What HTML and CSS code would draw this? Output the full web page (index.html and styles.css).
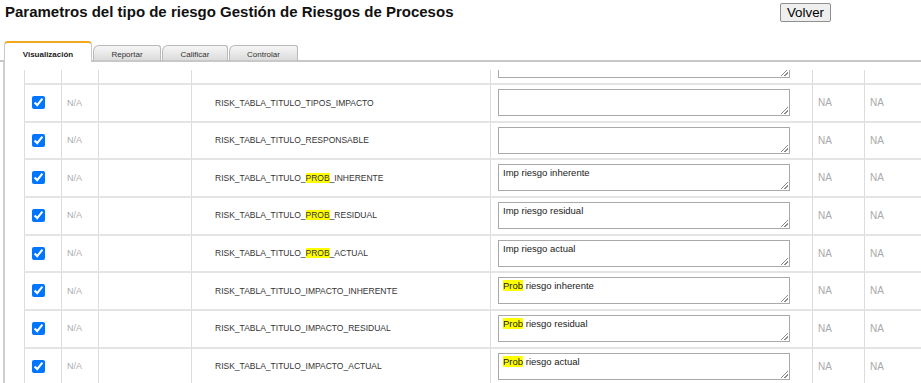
FILE: index.html
```html
<!DOCTYPE html>
<html lang="es">
<head>
    <meta charset="UTF-8">
    <meta name="viewport" content="width=device-width, initial-scale=1.0">
    <title>Parametros del tipo de riesgo</title>
    <link rel="stylesheet" href="styles.css">
</head>
<body>
    <header class="page-head">
        <h1 class="heading">Parametros del tipo de riesgo Gestión de Riesgos de Procesos</h1>
        <button class="btn-back">Volver</button>
    </header>

    <ul class="tabs">
        <li class="tab active">Visualización</li>
        <li class="tab tab-report">Reportar</li>
        <li class="tab tab-rate">Calificar</li>
        <li class="tab tab-control">Controlar</li>
    </ul>

    <div class="panel">
        <div class="scroll">
            <table class="params">
                <colgroup>
                    <col class="c-check">
                    <col class="c-na">
                    <col class="c-blank">
                    <col class="c-name">
                    <col class="c-text">
                    <col class="c-flag">
                    <col class="c-flag2">
                </colgroup>
                <tbody>
                    <!-- row scrolled mostly out of view, only the memo bottom shows -->
                    <tr>
                        <td></td>
                        <td></td>
                        <td></td>
                        <td></td>
                        <td class="cell-text"><div class="memo"><span class="grip"></span></div></td>
                        <td></td>
                        <td></td>
                    </tr>
                    <tr>
                        <td class="cell-check"><input type="checkbox" checked></td>
                        <td class="cell-na">N/A</td>
                        <td></td>
                        <td class="cell-name">RISK_TABLA_TITULO_TIPOS_IMPACTO</td>
                        <td class="cell-text"><div class="memo"><span class="grip"></span></div></td>
                        <td class="cell-flag">NA</td>
                        <td class="cell-flag">NA</td>
                    </tr>
                    <tr>
                        <td class="cell-check"><input type="checkbox" checked></td>
                        <td class="cell-na">N/A</td>
                        <td></td>
                        <td class="cell-name">RISK_TABLA_TITULO_RESPONSABLE</td>
                        <td class="cell-text"><div class="memo"><span class="grip"></span></div></td>
                        <td class="cell-flag">NA</td>
                        <td class="cell-flag">NA</td>
                    </tr>
                    <tr>
                        <td class="cell-check"><input type="checkbox" checked></td>
                        <td class="cell-na">N/A</td>
                        <td></td>
                        <td class="cell-name">RISK_TABLA_TITULO_<mark>PROB</mark>_INHERENTE</td>
                        <td class="cell-text"><div class="memo">Imp riesgo inherente<span class="grip"></span></div></td>
                        <td class="cell-flag">NA</td>
                        <td class="cell-flag">NA</td>
                    </tr>
                    <tr>
                        <td class="cell-check"><input type="checkbox" checked></td>
                        <td class="cell-na">N/A</td>
                        <td></td>
                        <td class="cell-name">RISK_TABLA_TITULO_<mark>PROB</mark>_RESIDUAL</td>
                        <td class="cell-text"><div class="memo">Imp riesgo residual<span class="grip"></span></div></td>
                        <td class="cell-flag">NA</td>
                        <td class="cell-flag">NA</td>
                    </tr>
                    <tr>
                        <td class="cell-check"><input type="checkbox" checked></td>
                        <td class="cell-na">N/A</td>
                        <td></td>
                        <td class="cell-name">RISK_TABLA_TITULO_<mark>PROB</mark>_ACTUAL</td>
                        <td class="cell-text"><div class="memo">Imp riesgo actual<span class="grip"></span></div></td>
                        <td class="cell-flag">NA</td>
                        <td class="cell-flag">NA</td>
                    </tr>
                    <tr>
                        <td class="cell-check"><input type="checkbox" checked></td>
                        <td class="cell-na">N/A</td>
                        <td></td>
                        <td class="cell-name">RISK_TABLA_TITULO_IMPACTO_INHERENTE</td>
                        <td class="cell-text"><div class="memo"><mark>Prob</mark> riesgo inherente<span class="grip"></span></div></td>
                        <td class="cell-flag">NA</td>
                        <td class="cell-flag">NA</td>
                    </tr>
                    <tr>
                        <td class="cell-check"><input type="checkbox" checked></td>
                        <td class="cell-na">N/A</td>
                        <td></td>
                        <td class="cell-name">RISK_TABLA_TITULO_IMPACTO_RESIDUAL</td>
                        <td class="cell-text"><div class="memo"><mark>Prob</mark> riesgo residual<span class="grip"></span></div></td>
                        <td class="cell-flag">NA</td>
                        <td class="cell-flag">NA</td>
                    </tr>
                    <tr>
                        <td class="cell-check"><input type="checkbox" checked></td>
                        <td class="cell-na">N/A</td>
                        <td></td>
                        <td class="cell-name">RISK_TABLA_TITULO_IMPACTO_ACTUAL</td>
                        <td class="cell-text"><div class="memo"><mark>Prob</mark> riesgo actual<span class="grip"></span></div></td>
                        <td class="cell-flag">NA</td>
                        <td class="cell-flag">NA</td>
                    </tr>
                </tbody>
            </table>
        </div>
    </div>
</body>
</html>
```

FILE: styles.css
```css
html, body {
    margin: 0;
    padding: 0;
    overflow: hidden;
    background-color: #fff;
}

body {
    font-family: "Liberation Sans", Arial, sans-serif;
    color: #222;
}

.page-head {
    display: flex;
    align-items: flex-start;
    height: 41px;
}

.heading {
    flex: 1;
    margin: 0;
    padding: 3px 5px 0;
    font-size: 15px;
    line-height: 17px;
    font-weight: bold;
    color: #111;
}

.btn-back {
    margin: 3px 90px 0 0;
    height: 19px;
    padding: 0 6px;
    font-family: "Liberation Sans", Arial, sans-serif;
    font-size: 13.33px;
    line-height: 17px;
    color: #000;
    background-color: #efefef;
    border: 1px solid #8f8f8f;
    border-radius: 2px;
}

/* tab strip */
.tabs {
    display: flex;
    align-items: flex-end;
    gap: 1px;
    list-style: none;
    margin: 0;
    padding: 0 0 0 4px;
    height: 19px;
    border-bottom: 2px solid #c8c8c8;
}

.tab {
    box-sizing: border-box;
    height: 17px;
    margin-bottom: -2px;
    padding-top: 4px;
    text-align: center;
    font-size: 8px;
    line-height: 10px;
    color: #333;
    background: linear-gradient(#f6f6f6, #dcdcdc);
    border: 1px solid #b9b9b9;
    border-bottom: 2px solid #c8c8c8;
    border-radius: 6px 3px 0 0;
}

.tab.active {
    width: 88px;
    height: 21px;
    padding-top: 7px;
    font-weight: bold;
    color: #222;
    background: #fff;
    border: 1px solid #c8c8c8;
    border-top: 2px solid #f2a81d;
    border-bottom: none;
    border-radius: 4px 4px 0 0;
}

.tab-report {
    width: 68px;
}

.tab-rate {
    width: 66px;
}

.tab-control {
    width: 69px;
}

/* content panel */
.panel {
    margin-left: 3px;
    padding: 8px 0 0 19px;
    border-left: 2px solid #cfcfcf;
}

.scroll {
    height: 313px;
    overflow: hidden;
}

.params {
    table-layout: fixed;
    width: 910px;
    margin-top: -24.67px;
    border-collapse: separate;
    border-spacing: 0;
}

.c-check { width: 37px; }
.c-na { width: 37px; }
.c-blank { width: 93px; }
.c-name { width: 299px; }
.c-text { width: 322px; }
.c-flag { width: 52px; }
.c-flag2 { width: 70px; }

.params td {
    padding: 4px 0 4.67px;
    vertical-align: middle;
    border-top: 2px solid #e4e4e4;
    border-left: 1px solid #dcdcdc;
    white-space: nowrap;
}

.params mark {
    background-color: #ffff00;
    color: inherit;
    padding: 0;
}

.cell-check {
    padding-left: 7px !important;
}

.cell-check input {
    display: block;
    width: 13px;
    height: 13px;
    margin: 0;
}

.cell-na {
    padding-left: 5px !important;
    font-size: 9px;
    color: #ababab;
}

.cell-name {
    padding-left: 23px !important;
    font-size: 8.5px;
    color: #333;
}

.cell-text {
    padding-left: 7px !important;
}

.cell-flag {
    padding-left: 5px !important;
    font-size: 10px;
    color: #aaa;
}

.memo {
    position: relative;
    box-sizing: border-box;
    width: 292px;
    height: 27px;
    padding: 2px 4px;
    border: 1px solid #a9a9a9;
    font-size: 9.5px;
    line-height: 11px;
    color: #1a1a1a;
    background-color: #fff;
}

/* resize handle drawn in the corner */
.grip {
    position: absolute;
    right: 1px;
    bottom: 1px;
    width: 7px;
    height: 7px;
    background: linear-gradient(135deg,
        transparent 0 44%, #8a8a8a 44% 54%, transparent 54% 70%, #8a8a8a 70% 80%, transparent 80%);
}
```
